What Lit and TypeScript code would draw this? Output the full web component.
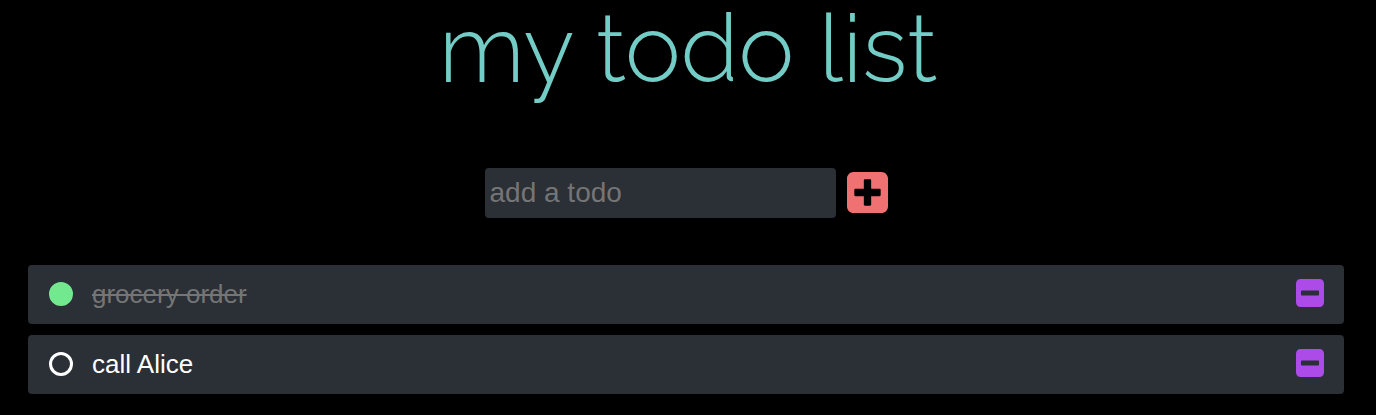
import { LitElement, html, css } from "lit";
import { customElement, state } from "lit/decorators.js";
import { classMap } from "lit/directives/class-map.js";

interface Todo {
  id: number;
  text: string;
  done: boolean;
}

const SQUARE =
  "M376 32H72C32.200 32 0 64.200 0 104v304c0 39.800 32.200 72 72 72h304c39.800 0 72-32.200 72-72V104c0-39.800-32.200-72-72-72z";
const PLUS =
  "M368 284c0 6.600-5.400 12-12 12h-92v92c0 6.600-5.400 12-12 12h-56c-6.600 0-12-5.400-12-12v-92H92c-6.600 0-12-5.400-12-12v-56c0-6.600 5.400-12 12-12h92v-92c0-6.600 5.400-12 12-12h56c6.600 0 12 5.400 12 12v92h92c6.600 0 12 5.400 12 12v56z";
const MINUS =
  "M92 296c-6.600 0-12-5.400-12-12v-56c0-6.600 5.400-12 12-12h264c6.600 0 12 5.400 12 12v56c0 6.600-5.400 12-12 12H92z";

@customElement("app-root")
export class AppRoot extends LitElement {
  static styles = css`
    :host {
      display: block;
      min-height: 100vh;
      box-sizing: border-box;
      padding: 0 32px 20px 28px;
      background: #000;
      color: #fff;
      font-family: "Liberation Sans", Arial, sans-serif;
    }
    .title {
      margin: 0;
      padding-left: 4px;
      font-family: Raleway, Lato, sans-serif;
      font-weight: 350;
      font-size: 94px;
      line-height: 98px;
      text-align: center;
      color: #73cdc6;
    }
    .form {
      display: flex;
      justify-content: center;
      align-items: center;
      gap: 11px;
      margin: 70px 0 47px;
    }
    .entry {
      box-sizing: border-box;
      width: 351px;
      height: 50px;
      min-width: 0;
      padding: 0 5px;
      border: 0;
      border-radius: 4px;
      background: #2b2f36;
      color: #fff;
      font: inherit;
      font-size: 28px;
    }
    .entry::placeholder {
      color: #757575;
      opacity: 1;
    }
    button {
      flex: none;
      display: block;
      padding: 0;
      border: 0;
      background: none;
      cursor: pointer;
    }
    .icon {
      display: block;
      fill: currentColor;
    }
    .add {
      width: 41px;
      margin-bottom: 1px;
      color: #f07171;
    }
    .remove {
      width: 28px;
      margin-bottom: 4px;
      color: #ac4be8;
    }
    .list {
      display: grid;
      gap: 11px;
      margin: 0;
      padding: 0;
      list-style: none;
    }
    .item {
      display: flex;
      align-items: center;
      justify-content: space-between;
      height: 59px;
      box-sizing: border-box;
      padding: 0 20px 0 21px;
      border-radius: 4px;
      background: #2b2f36;
    }
    .label {
      display: flex;
      align-items: center;
      gap: 19px;
      margin-bottom: 2px;
      font-size: 26px;
      line-height: 30px;
      cursor: pointer;
    }
    .check {
      appearance: none;
      box-sizing: border-box;
      width: 24px;
      height: 24px;
      margin: 0;
      border: 3px solid #fff;
      border-radius: 50%;
      cursor: pointer;
    }
    .check:checked {
      border-color: #72e88f;
      background: #72e88f;
    }
    .done {
      color: #757575;
      text-decoration: line-through;
    }
  `;

  @state() private todos: Todo[] = [
    { id: 1, text: "grocery order", done: true },
    { id: 2, text: "call Alice", done: false },
  ];

  private nextId = 3;

  private add(e: Event) {
    e.preventDefault();
    const input = this.renderRoot.querySelector<HTMLInputElement>(".entry")!;
    const text = input.value.trim();
    if (!text) return;
    this.todos = [...this.todos, { id: this.nextId++, text, done: false }];
    input.value = "";
  }

  private toggle(id: number) {
    this.todos = this.todos.map((t) => (t.id === id ? { ...t, done: !t.done } : t));
  }

  private remove(id: number) {
    this.todos = this.todos.filter((t) => t.id !== id);
  }

  render() {
    return html`
      <h1 class="title">my todo list</h1>
      <form class="form" @submit=${this.add}>
        <input class="entry" type="text" placeholder="add a todo" aria-label="add a todo" />
        <button class="add" type="submit" aria-label="add">
          <svg class="icon" viewBox="0 32 448 448" aria-hidden="true">
            <path fill-rule="evenodd" d="${SQUARE}${PLUS}"></path>
          </svg>
        </button>
      </form>
      <ul class="list">
        ${this.todos.map(
          (t) => html`
            <li class="item">
              <label class="label">
                <input
                  class="check"
                  type="checkbox"
                  .checked=${t.done}
                  @change=${() => this.toggle(t.id)}
                />
                <span class=${classMap({ done: t.done })}>${t.text}</span>
              </label>
              <button class="remove" type="button" aria-label="remove" @click=${() => this.remove(t.id)}>
                <svg class="icon" viewBox="0 32 448 448" aria-hidden="true">
                  <path fill-rule="evenodd" d="${SQUARE}${MINUS}"></path>
                </svg>
              </button>
            </li>
          `
        )}
      </ul>
    `;
  }
}
